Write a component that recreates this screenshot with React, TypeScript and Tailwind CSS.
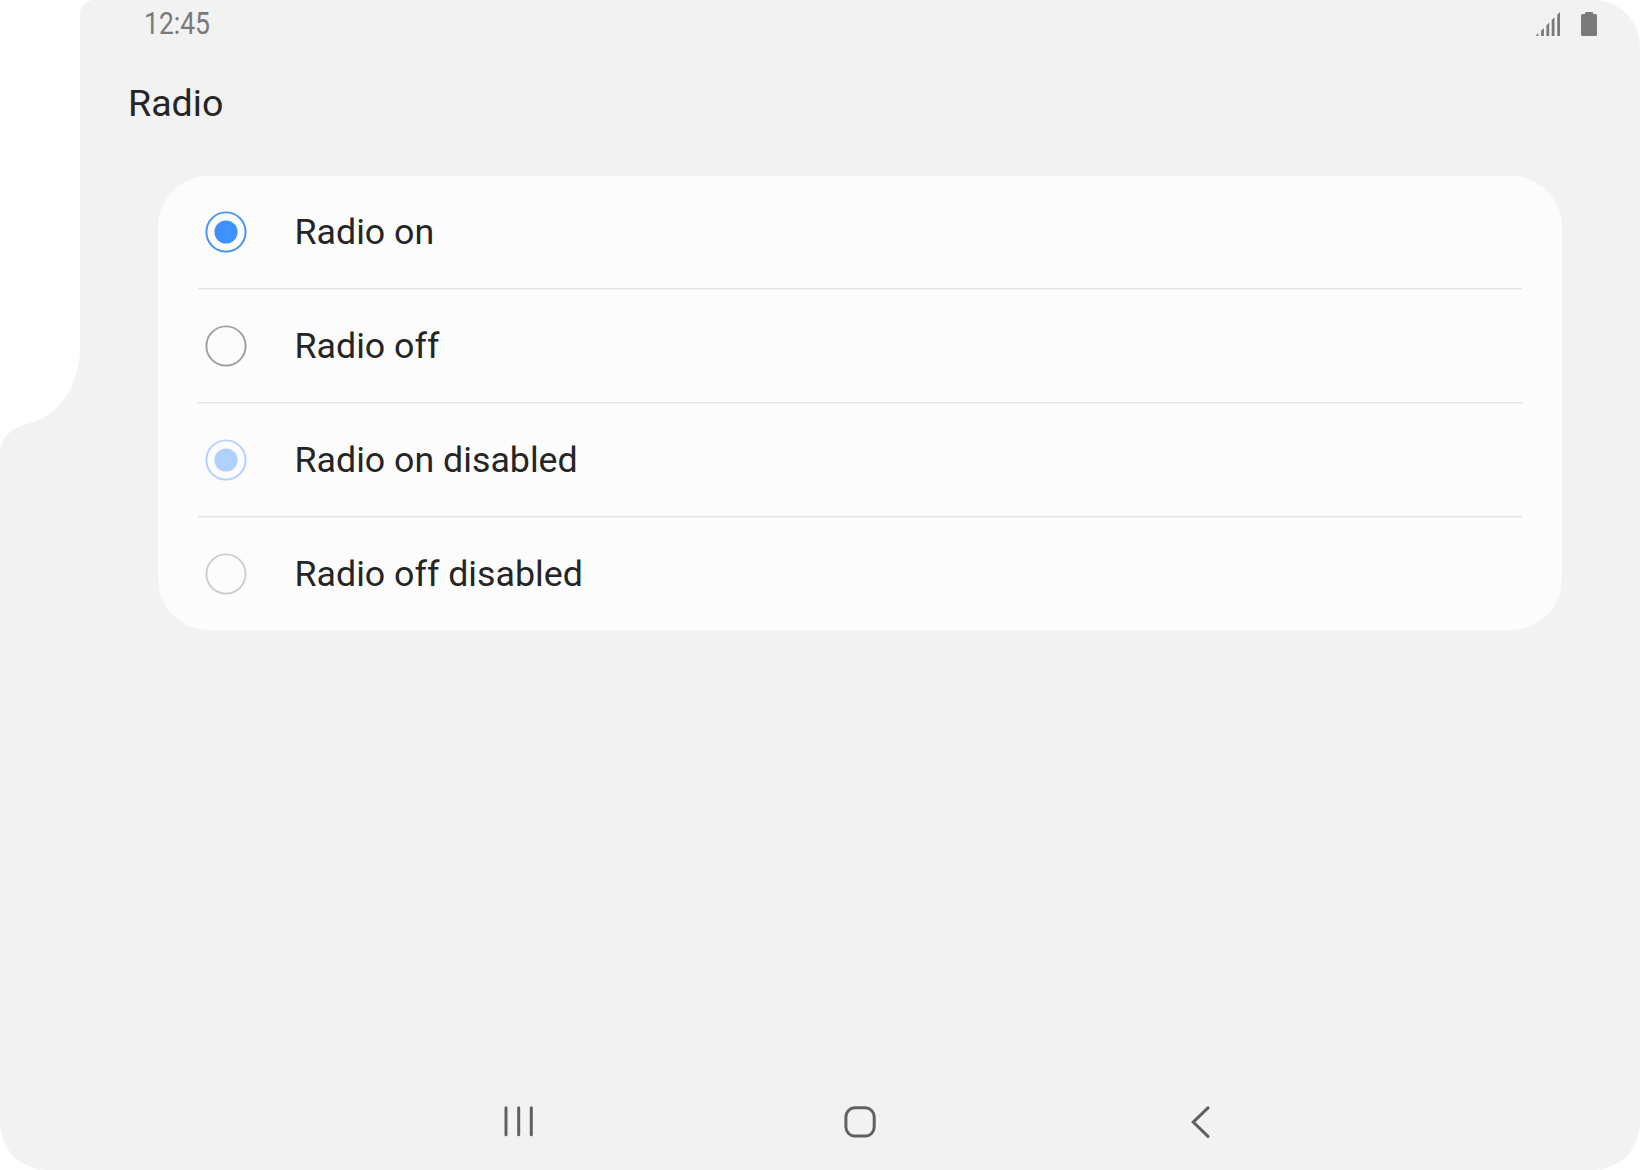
import React from "react";

type RadioItem = { label: string; checked: boolean; disabled: boolean };

const items: RadioItem[] = [
  { label: "Radio on", checked: true, disabled: false },
  { label: "Radio off", checked: false, disabled: false },
  { label: "Radio on disabled", checked: true, disabled: true },
  { label: "Radio off disabled", checked: false, disabled: true },
];

function RadioMark({ checked, disabled }: { checked: boolean; disabled: boolean }) {
  return (
    <svg
      viewBox="0 0 42 42"
      className={`h-[42px] w-[42px] shrink-0 ${checked ? "text-[#3e91ff]" : "text-[#9e9e9e]"} ${
        disabled ? (checked ? "opacity-40" : "opacity-50") : ""
      }`}
    >
      <circle cx="21" cy="21" r="19.6" fill="none" stroke="currentColor" strokeWidth="1.9" />
      {checked && <circle cx="21" cy="21" r="11.6" fill="currentColor" />}
    </svg>
  );
}

function StatusBar() {
  return (
    <header className="flex h-12 items-center justify-between pr-[43px] pl-[144px] text-[#7a7a7a]">
      <span className="origin-left scale-x-[0.855] text-[31px] leading-[48px]">12:45</span>
      <div className="flex items-center gap-[21px]">
        <svg viewBox="0 0 24 24" className="h-6 w-6" fill="currentColor">
          <path d="M0 24V23.4L2.4 21V24ZM5.1 24V18.7L7.9 15.9V24ZM10.4 24V13.4L13.2 10.6V24ZM15.7 24V8.1L18.5 5.3V24ZM21.2 24V2.8L24 0V24Z" />
        </svg>
        <svg viewBox="0 0 16 24" className="h-6 w-4" fill="currentColor">
          <path d="M5 0H11Q12 0 12 1V2H14.5Q16 2 16 3.5V22.5Q16 24 14.5 24H1.5Q0 24 0 22.5V3.5Q0 2 1.5 2H4V1Q4 0 5 0Z" />
        </svg>
      </div>
    </header>
  );
}

function NavigationBar() {
  return (
    <nav className="mt-auto flex h-24 items-center justify-center gap-[308px] pl-20 text-[#606060]">
      <svg viewBox="0 0 32 32" className="h-8 w-8" fill="none" stroke="currentColor" strokeWidth="3" strokeLinecap="round">
        <path d="M2 1.8V28.7M14.7 1.8V28.7M27.3 1.8V28.7" />
      </svg>
      <svg viewBox="0 0 32 32" className="h-8 w-8" fill="none" stroke="currentColor" strokeWidth="3">
        <rect x="1.9" y="1.8" width="28.3" height="28.3" rx="9" />
      </svg>
      <svg viewBox="0 0 32 32" className="h-8 w-8" fill="none" stroke="currentColor" strokeWidth="3" strokeLinecap="round">
        <path d="M24 1.8L9.2 16.1L24 30.4" />
      </svg>
    </nav>
  );
}

export default function App() {
  return (
    <div className="h-[1170px] w-[1640px] overflow-hidden bg-white font-['Roboto',sans-serif]">
      <div className="flex h-full flex-col bg-[#f2f2f2] [clip-path:path('M80_15C80_6_86_0_95_0H1592C1619_0_1640_20_1640_48V1122C1640_1150_1619_1170_1592_1170H48C21_1170_0_1150_0_1122V455C0_439_11_427_27_424C57_418_80_387_80_347Z')]">
        <StatusBar />
        <h1 className="mt-[31px] pl-[128px] text-[37.6px] leading-[48px] text-[#252525]">Radio</h1>
        <main className="mt-[49px] mr-[78px] ml-[158px] rounded-[51px] bg-[#fcfcfc] px-10">
          {items.map((item, i) => (
            <React.Fragment key={item.label}>
              {i > 0 && <div className="h-0.5 border-t border-[#e4e4e4] bg-[#f0f0f0]" />}
              <div className="flex h-28 items-center gap-[47.5px] pl-[7px]">
                <RadioMark checked={item.checked} disabled={item.disabled} />
                <span className="text-[35.75px] leading-[48px] text-[#252525]">{item.label}</span>
              </div>
            </React.Fragment>
          ))}
        </main>
        <NavigationBar />
      </div>
    </div>
  );
}
